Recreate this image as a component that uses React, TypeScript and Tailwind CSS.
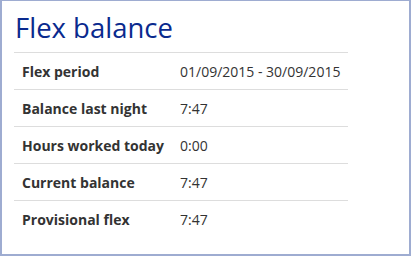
const rows: [string, string][] = [
  ["Flex period", "01/09/2015 - 30/09/2015"],
  ["Balance last night", "7:47"],
  ["Hours worked today", "0:00"],
  ["Current balance", "7:47"],
  ["Provisional flex", "7:47"],
];

export default function App() {
  return (
    <div className="h-[256px] w-[411px] border-x-2 border-b-2 border-t border-[#9eacd1] bg-white font-['Open_Sans',sans-serif] text-[#333]">
      <h1 className="pl-[13px] pt-[8px] text-[27.5px] leading-[38px] text-[#0a2a8e]">Flex balance</h1>
      <div className="ml-[12px] mt-[5px] w-[334px]">
        {rows.map(([label, value]) => (
          <div key={label} className="flex h-[37px] items-center border-t border-[#dddddd]">
            <div className="w-[166px] pl-[8px] text-[14px] font-bold">{label}</div>
            <div className="text-[14px]">{value}</div>
          </div>
        ))}
      </div>
    </div>
  );
}
